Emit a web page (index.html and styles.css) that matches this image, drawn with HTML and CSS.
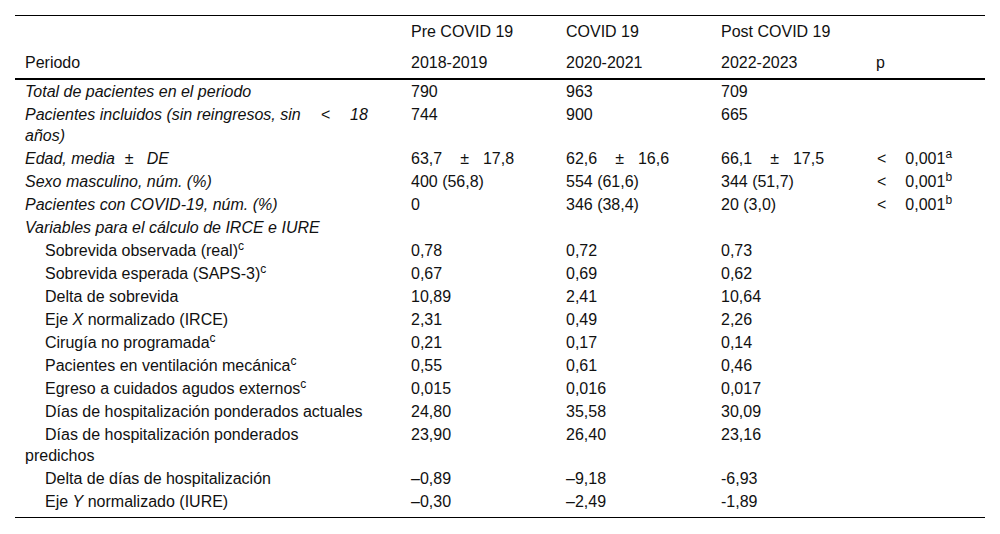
FILE: index.html
```html
<!DOCTYPE html>
<html lang="es">
<head>
<meta charset="utf-8">
<link rel="stylesheet" href="styles.css">
</head>
<body>
<table class="tbl">
  <colgroup>
    <col class="c-label"><col class="c-val"><col class="c-val"><col class="c-val"><col class="c-p">
  </colgroup>
  <thead>
    <tr class="h1"><th></th><th>Pre COVID 19</th><th>COVID 19</th><th>Post COVID 19</th><th></th></tr>
    <tr class="h2"><th>Periodo</th><th>2018-2019</th><th>2020-2021</th><th>2022-2023</th><th>p</th></tr>
  </thead>
  <tbody>
    <tr><td class="it">Total de pacientes en el periodo</td><td>790</td><td>963</td><td>709</td><td></td></tr>
    <tr><td class="it">Pacientes incluidos (sin reingresos, sin<span class="op-l">&lt;</span>18 años)</td><td>744</td><td>900</td><td>665</td><td></td></tr>
    <tr><td class="it">Edad, media<span class="op-s">±</span>DE</td><td>63,7<span class="op">±</span>17,8</td><td>62,6<span class="op">±</span>16,6</td><td>66,1<span class="op">±</span>17,5</td><td><span class="lt">&lt;</span>0,001<sup>a</sup></td></tr>
    <tr><td class="it">Sexo masculino, núm. (%)</td><td>400 (56,8)</td><td>554 (61,6)</td><td>344 (51,7)</td><td><span class="lt">&lt;</span>0,001<sup>b</sup></td></tr>
    <tr><td class="it">Pacientes con COVID-19, núm. (%)</td><td>0</td><td>346 (38,4)</td><td>20 (3,0)</td><td><span class="lt">&lt;</span>0,001<sup>b</sup></td></tr>
    <tr><td class="it">Variables para el cálculo de IRCE e IURE</td><td></td><td></td><td></td><td></td></tr>
    <tr><td class="sub">Sobrevida observada (real)<sup>c</sup></td><td>0,78</td><td>0,72</td><td>0,73</td><td></td></tr>
    <tr><td class="sub">Sobrevida esperada (SAPS-3)<sup>c</sup></td><td>0,67</td><td>0,69</td><td>0,62</td><td></td></tr>
    <tr><td class="sub">Delta de sobrevida</td><td>10,89</td><td>2,41</td><td>10,64</td><td></td></tr>
    <tr><td class="sub">Eje <i>X</i> normalizado (IRCE)</td><td>2,31</td><td>0,49</td><td>2,26</td><td></td></tr>
    <tr><td class="sub">Cirugía no programada<sup>c</sup></td><td>0,21</td><td>0,17</td><td>0,14</td><td></td></tr>
    <tr><td class="sub">Pacientes en ventilación mecánica<sup>c</sup></td><td>0,55</td><td>0,61</td><td>0,46</td><td></td></tr>
    <tr><td class="sub">Egreso a cuidados agudos externos<sup>c</sup></td><td>0,015</td><td>0,016</td><td>0,017</td><td></td></tr>
    <tr><td class="sub">Días de hospitalización ponderados actuales</td><td>24,80</td><td>35,58</td><td>30,09</td><td></td></tr>
    <tr><td class="sub">Días de hospitalización ponderados predichos</td><td>23,90</td><td>26,40</td><td>23,16</td><td></td></tr>
    <tr><td class="sub">Delta de días de hospitalización</td><td>–0,89</td><td>–9,18</td><td>-6,93</td><td></td></tr>
    <tr class="last"><td class="sub">Eje <i>Y</i> normalizado (IURE)</td><td>–0,30</td><td>–2,49</td><td>-1,89</td><td></td></tr>
  </tbody>
</table>
</body>
</html>
```
FILE: styles.css
```css
html, body {
  margin: 0;
  padding: 0;
  background: #fff;
}
body {
  font-family: "Liberation Sans", Arial, sans-serif;
  font-size: 16px;
  color: #111;
}
.tbl {
  margin: 15px 15px 0 15px;
  width: 970px;
  border-collapse: collapse;
  table-layout: fixed;
  border-top: 1px solid #000;
  border-bottom: 1px solid #000;
}
.c-label { width: 386px; }
.c-val { width: 155px; }
.c-p { width: 119px; }
th, td {
  text-align: left;
  vertical-align: top;
  padding: 1px 10px;
  line-height: 21px;
  font-weight: normal;
}
th:first-child, td:first-child {
  padding-right: 32px;
}
thead th {
  padding-top: 5px;
  padding-bottom: 5px;
}
thead .h2 th {
  border-bottom: 2px solid #000;
}
.it { font-style: italic; }
.sub { text-indent: 20px; }
.op { margin: 0 14px 0 18px; }
.op-l { margin: 0 20px 0 20px; }
.op-s { margin: 0 13px 0 10px; }
.lt { margin: 0 19px 0 1px; }
sup {
  font-size: 12px;
  line-height: 0;
  vertical-align: 6px;
}
.last td { padding-bottom: 5px; }
```
